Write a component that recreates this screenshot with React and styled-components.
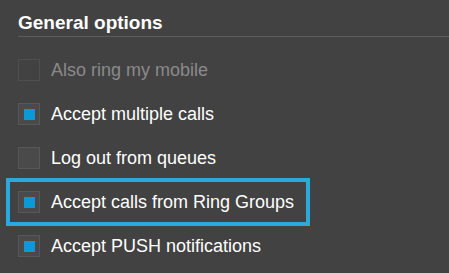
import React from "react";
import styled, { createGlobalStyle } from "styled-components";

const GlobalStyle = createGlobalStyle`
  html, body {
    margin: 0;
    padding: 0;
    background: #424242;
  }
  body {
    font-family: "Liberation Sans", Arial, sans-serif;
    width: 449px;
    height: 273px;
    overflow: hidden;
  }
`;

const Panel = styled.div`
  display: flex;
  flex-direction: column;
  padding-left: 8px;
`;

const Title = styled.h2`
  margin: 0 0 11px 10px;
  padding-top: 11px;
  height: 25px;
  font-size: 19px;
  font-weight: 700;
  line-height: 24px;
  color: #ffffff;
  border-bottom: 1px solid #5c5c5c;
`;

const Row = styled.label`
  display: flex;
  align-items: center;
  gap: 11px;
  width: 290px;
  height: 44px;
  padding-left: 10px;
  font-size: 18px;
  color: ${(p) => (p.disabled ? "#8a8a8a" : "#ffffff")};
  outline: ${(p) => (p.focused ? "4px solid #2ba8dc" : "none")};
  outline-offset: -2px;
`;

const Box = styled.span`
  box-sizing: border-box;
  display: flex;
  align-items: center;
  justify-content: center;
  width: 22px;
  height: 22px;
  flex-shrink: 0;
  border: 1px solid ${(p) => (p.disabled ? "#4f4f4f" : "#575757")};
  background: ${(p) => (p.disabled ? "transparent" : "#4a4a4a")};
`;

const Mark = styled.span`
  width: 11px;
  height: 11px;
  background: #0a9ad8;
`;

const options = [
  { label: "Also ring my mobile", disabled: true },
  { label: "Accept multiple calls", checked: true },
  { label: "Log out from queues" },
  { label: "Accept calls from Ring Groups", checked: true, focused: true },
  { label: "Accept PUSH notifications", checked: true },
];

export default function App() {
  return (
    <>
      <GlobalStyle />
      <Panel>
        <Title>General options</Title>
        {options.map((o) => (
          <Row key={o.label} disabled={o.disabled} focused={o.focused}>
            <Box disabled={o.disabled}>{o.checked && <Mark />}</Box>
            {o.label}
          </Row>
        ))}
      </Panel>
    </>
  );
}
